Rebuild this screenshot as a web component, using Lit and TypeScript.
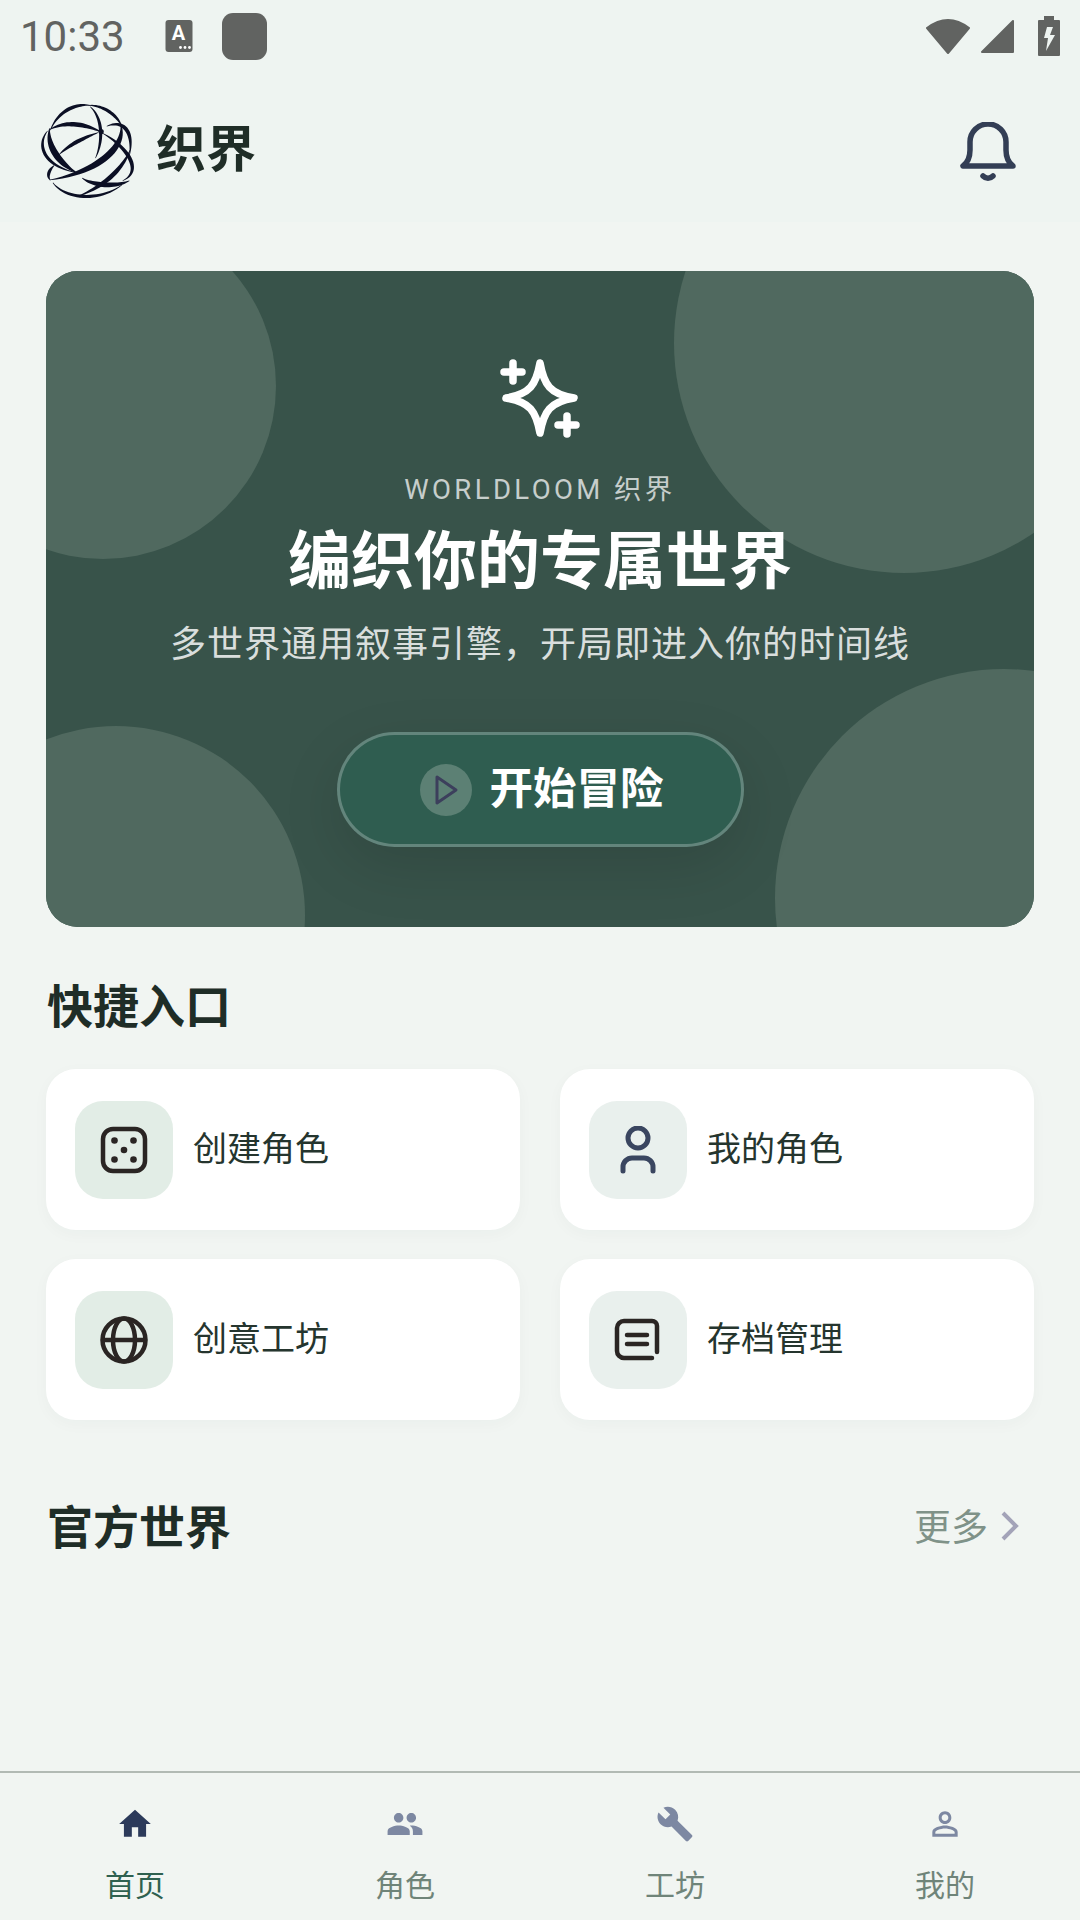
import { LitElement, html, css, svg } from 'lit'
import { customElement } from 'lit/decorators.js'

type Pt = [number, number]

// tapered brush stroke along a cubic, so the logo arcs swell like the original
const brush = (a: Pt, b: Pt, c: Pt, d: Pt, w: number) => {
	const left: string[] = []
	const right: string[] = []
	const n = 24
	for (let i = 0; i <= n; i++) {
		const t = i / n
		const u = 1 - t
		const x = u * u * u * a[0] + 3 * u * u * t * b[0] + 3 * u * t * t * c[0] + t * t * t * d[0]
		const y = u * u * u * a[1] + 3 * u * u * t * b[1] + 3 * u * t * t * c[1] + t * t * t * d[1]
		const dx = 3 * u * u * (b[0] - a[0]) + 6 * u * t * (c[0] - b[0]) + 3 * t * t * (d[0] - c[0])
		const dy = 3 * u * u * (b[1] - a[1]) + 6 * u * t * (c[1] - b[1]) + 3 * t * t * (d[1] - c[1])
		const len = Math.hypot(dx, dy) || 1
		const half = (w / 2) * Math.sin(Math.PI * t) + 0.8
		left.push(`${(x - (dy / len) * half).toFixed(1)} ${(y + (dx / len) * half).toFixed(1)}`)
		right.unshift(`${(x + (dy / len) * half).toFixed(1)} ${(y - (dx / len) * half).toFixed(1)}`)
	}
	return `M${left.concat(right).join('L')}Z`
}

// coordinates follow a 390x360 crop of the mark
const LOGO_STROKES: [Pt, Pt, Pt, Pt, number][] = [
	[[92, 118], [120, 50], [180, 38], [212, 43], 9],
	[[205, 43], [255, 42], [295, 75], [308, 108], 8],
	[[212, 47], [250, 80], [252, 150], [228, 202], 8],
	[[90, 116], [140, 88], [200, 100], [246, 124], 12],
	[[90, 112], [80, 165], [120, 220], [172, 246], 18],
	[[118, 192], [150, 160], [195, 140], [236, 125], 10],
	[[304, 100], [320, 160], [250, 240], [90, 268], 18],
	[[92, 268], [80, 255], [90, 235], [104, 224], 8],
	[[84, 120], [50, 160], [70, 225], [168, 245], 8],
	[[262, 106], [310, 85], [345, 120], [330, 195], 10],
	[[248, 126], [320, 165], [375, 240], [310, 270], 10],
	[[330, 270], [290, 290], [220, 285], [188, 262], 13],
	[[100, 276], [135, 325], [240, 335], [308, 282], 8],
	[[176, 316], [250, 290], [310, 235], [332, 178], 12],
]

@customElement('app-root')
export class AppRoot extends LitElement {
	static styles = css`
		:host {
			display: block;
			font-family: Roboto, 'Noto Sans CJK SC', sans-serif;
		}

		.page {
			width: 1080px;
			height: 1920px;
			display: flex;
			flex-direction: column;
			background: #f1f5f2;
			color: #1f2d27;
		}

		.top {
			background: #eef4f1;
		}

		.status {
			height: 72px;
			display: flex;
			align-items: center;
			padding: 0 20px;
			color: #616361;
		}

		.time {
			font-size: 42px;
			width: 145px;
		}

		.status-a {
			display: block;
			margin-right: 29px;
		}

		.status-app {
			width: 45px;
			height: 47px;
			border-radius: 11px;
			background: #616361;
		}

		.status-right {
			margin-left: auto;
			display: flex;
			align-items: center;
			gap: 9px;
		}

		.status-right svg {
			display: block;
		}

		.battery {
			margin-left: 14px;
		}

		.header {
			height: 150px;
			display: flex;
			align-items: center;
			padding: 0 62px 0 33px;
		}

		.logo {
			margin-top: 7px;
		}

		.bell {
			margin-top: 14px;
		}

		.header h1 {
			margin: 5px 0 0 20px;
			font-size: 50px;
			font-weight: 700;
			line-height: 60px;
			flex: 1;
		}

		main {
			flex: 1;
			padding: 49px 46px 0;
		}

		.hero {
			position: relative;
			overflow: hidden;
			height: 656px;
			box-sizing: border-box;
			padding-top: 87px;
			border-radius: 32px;
			background: #38534a;
			display: flex;
			flex-direction: column;
			align-items: center;
			color: #fff;
		}

		.blob {
			position: absolute;
			border-radius: 50%;
			background: #50695f;
		}

		.blob.a {
			width: 346px;
			height: 346px;
			left: -116px;
			top: -58px;
		}

		.blob.b {
			width: 460px;
			height: 460px;
			left: 628px;
			top: -158px;
		}

		.blob.c {
			width: 378px;
			height: 378px;
			left: -119px;
			top: 455px;
		}

		.blob.d {
			width: 458px;
			height: 458px;
			left: 729px;
			top: 398px;
		}

		.hero > svg,
		.hero > div:not(.blob),
		.hero > h2 {
			position: relative;
		}

		.eyebrow {
			margin-top: 34px;
			font-size: 27.5px;
			line-height: 36px;
			letter-spacing: 3.4px;
			color: rgba(255, 255, 255, 0.72);
		}

		.hero h2 {
			margin: 18px 0 0;
			font-size: 63px;
			line-height: 72px;
			font-weight: 700;
		}

		.sub {
			margin-top: 22px;
			font-size: 36px;
			line-height: 50px;
			letter-spacing: 1px;
			color: rgba(255, 255, 255, 0.82);
		}

		.start {
			margin-top: 62px;
			width: 407px;
			height: 115px;
			box-sizing: border-box;
			border: 3px solid rgba(255, 255, 255, 0.25);
			border-radius: 58px;
			background: #2f5d50;
			box-shadow: 0 20px 60px rgba(0, 0, 0, 0.12);
			display: flex;
			align-items: center;
			padding-left: 80px;
			font-size: 43.5px;
			font-weight: 700;
		}

		.start-label {
			margin-bottom: 9px;
		}

		.play {
			width: 52px;
			height: 52px;
			border-radius: 50%;
			background: #5c8074;
			margin-right: 18px;
			display: flex;
			align-items: center;
			justify-content: center;
		}

		.section {
			display: flex;
			align-items: center;
			justify-content: space-between;
			height: 56px;
			padding: 0 15px 4px 1px;
			font-size: 46px;
			font-weight: 700;
			margin-top: 48px;
		}

		.section.far {
			margin-top: 76px;
		}

		.more {
			display: flex;
			align-items: center;
			gap: 13px;
			margin-top: 2px;
			font-size: 37px;
			font-weight: 400;
			color: #7f9288;
		}

		.more svg {
			margin-top: 2px;
		}

		.grid {
			margin-top: 34px;
			display: grid;
			grid-template-columns: 474px 474px;
			gap: 29px 40px;
		}

		.tile {
			height: 161px;
			box-sizing: border-box;
			border-radius: 30px;
			background: #fff;
			box-shadow: 0 4px 16px rgba(40, 70, 60, 0.03);
			display: flex;
			align-items: center;
			padding-left: 29px;
			font-size: 34px;
			color: #25352e;
		}

		.tile-label {
			margin-bottom: 6px;
		}

		.tile-icon {
			width: 98px;
			height: 98px;
			border-radius: 28px;
			background: #e2ede6;
			display: flex;
			align-items: center;
			justify-content: center;
			margin-right: 20px;
		}

		.tile-icon.soft {
			background: #e9f0ed;
		}

		nav {
			height: 149px;
			box-sizing: border-box;
			border-top: 2px solid #b2bab4;
			display: grid;
			grid-template-columns: repeat(4, 1fr);
		}

		.tab {
			display: flex;
			flex-direction: column;
			align-items: center;
			padding-top: 32px;
			font-size: 30px;
			line-height: 42px;
			color: #6f8479;
		}

		.tab.on {
			color: #2f6150;
		}

		.tab svg {
			display: block;
			margin-bottom: 22px;
			fill: #7d88a2;
		}

		.tab.on svg {
			fill: #2c3a5a;
		}

		.ink {
			fill: none;
			stroke: #2a2523;
			stroke-width: 4.5;
			stroke-linecap: round;
			stroke-linejoin: round;
		}

		.ink.blue {
			stroke: #3a4660;
			stroke-width: 5;
		}
	`

	private logo() {
		return html`<svg class="logo" width="103" height="99" viewBox="40 30 310 298" fill="#0b0f24">
			${LOGO_STROKES.map(([a, b, c, d, w]) => svg`<path d=${brush(a, b, c, d, w)}></path>`)}
			<circle cx="245" cy="122" r="8"></circle>
		</svg>`
	}

	private tile(label: string, icon: unknown, soft = false) {
		return html`<div class="tile">
			<div class="tile-icon ${soft ? 'soft' : ''}">${icon}</div>
			<span class="tile-label">${label}</span>
		</div>`
	}

	private tab(label: string, size: number, d: string, on = false) {
		return html`<div class="tab ${on ? 'on' : ''}">
			<svg width=${size} height=${size} viewBox="0 0 24 24"><path d=${d}></path></svg>
			${label}
		</div>`
	}

	render() {
		const die = html`<svg width="48" height="48" viewBox="0 0 48 48">
			<rect class="ink" x="3" y="3" width="42" height="42" rx="10"></rect>
			<g fill="#2a2523">
				<circle cx="14.5" cy="14.5" r="3.3"></circle>
				<circle cx="33.5" cy="14.5" r="3.3"></circle>
				<circle cx="24" cy="24" r="3.3"></circle>
				<circle cx="14.5" cy="33.5" r="3.3"></circle>
				<circle cx="33.5" cy="33.5" r="3.3"></circle>
			</g>
		</svg>`
		const person = html`<svg width="48" height="48" viewBox="0 0 48 48">
			<circle class="ink blue" cx="24" cy="12" r="10"></circle>
			<path class="ink blue" d="M9 45v-4a9 9 0 0 1 9-9h12a9 9 0 0 1 9 9v4"></path>
		</svg>`
		const globe = html`<svg width="48" height="48" viewBox="0 0 48 48">
			<circle class="ink" cx="24" cy="24" r="21.5"></circle>
			<ellipse class="ink" cx="24" cy="24" rx="11" ry="21.5"></ellipse>
			<path class="ink" d="M3 24h42"></path>
		</svg>`
		const archive = html`<svg width="48" height="48" viewBox="0 0 48 48">
			<path class="ink" d="M43 36V10a5 5 0 0 0-5-5H10a7 7 0 0 0-7 7v23a7 7 0 0 0 7 7h28"></path>
			<path class="ink" d="M13 19h20M13 28h20"></path>
		</svg>`

		return html`<div class="page">
			<div class="top">
				<div class="status">
					<span class="time">10:33</span>
					<svg class="status-a" width="28" height="32" viewBox="0 0 27 32">
						<rect width="27" height="32" rx="3" fill="#616361"></rect>
						<text x="13" y="20" text-anchor="middle" font-size="20" font-weight="700" fill="#fff" font-family="Roboto">A</text>
						<g fill="#fff"><circle cx="15" cy="27.5" r="1.4"></circle><circle cx="19.5" cy="27.5" r="1.4"></circle><circle cx="24" cy="27.5" r="1.4"></circle></g>
					</svg>
					<div class="status-app"></div>
					<div class="status-right">
						<svg width="46" height="38" viewBox="0 0 46 38">
							<path d="M2 11Q23-5 44 11L23 36Z" fill="#616361" stroke="#616361" stroke-width="2" stroke-linejoin="round"></path>
						</svg>
						<svg width="35" height="36" viewBox="0 0 35 36">
							<path d="M33 3V34H2Z" fill="#616361" stroke="#616361" stroke-width="2" stroke-linejoin="round"></path>
						</svg>
						<svg class="battery" width="22" height="40" viewBox="0 0 22 40">
							<path d="M6 0h10v4h5a1 1 0 0 1 1 1v34a1 1 0 0 1-1 1H1a1 1 0 0 1-1-1V5a1 1 0 0 1 1-1h5Z" fill="#616361"></path>
							<path d="M9 11h6l-3 8h5l-9 16 2-13H6Z" fill="#eef4f1"></path>
						</svg>
					</div>
				</div>
				<div class="header">
					${this.logo()}
					<h1>织界</h1>
					<svg class="bell" width="60" height="64" viewBox="0 0 60 64" fill="none" stroke="#333e55" stroke-width="5.5" stroke-linecap="round" stroke-linejoin="round">
						<path d="M5 44h50c-4-3-7-9-7-16v-8a18 18 0 0 0-36 0v8c0 7-3 13-7 16Z"></path>
						<path d="M25 54c3 3 7 3 10 0"></path>
					</svg>
				</div>
			</div>
			<main>
				<section class="hero">
					<span class="blob a"></span>
					<span class="blob b"></span>
					<span class="blob c"></span>
					<span class="blob d"></span>
					<svg width="80" height="80" viewBox="0 0 80 80" fill="none" stroke="#fff" stroke-width="7.5" stroke-linecap="round" stroke-linejoin="round">
						<path d="M40 5C44 27 50 36 74 40 50 44 44 53 40 75 36 53 30 44 6 40 30 36 36 27 40 5Z"></path>
						<path d="M13 5v18M4 14h18M67 58v18M58 67h18"></path>
					</svg>
					<div class="eyebrow">WORLDLOOM 织界</div>
					<h2>编织你的专属世界</h2>
					<div class="sub">多世界通用叙事引擎，开局即进入你的时间线</div>
					<div class="start">
						<span class="play">
							<svg width="26" height="32" viewBox="0 0 26 32" fill="none" stroke="#3c3f5c" stroke-width="3" stroke-linejoin="round">
								<path d="M4 3l19 13L4 29Z"></path>
							</svg>
						</span>
						<span class="start-label">开始冒险</span>
					</div>
				</section>
				<div class="section">快捷入口</div>
				<div class="grid">
					${this.tile('创建角色', die)}
					${this.tile('我的角色', person, true)}
					${this.tile('创意工坊', globe)}
					${this.tile('存档管理', archive, true)}
				</div>
				<div class="section far">
					官方世界
					<span class="more">
						更多
						<svg width="18" height="30" viewBox="0 0 18 30" fill="none" stroke="#a3a3b8" stroke-width="4">
							<path d="M2 2l13 13L2 28"></path>
						</svg>
					</span>
				</div>
			</main>
			<nav>
				${this.tab('首页', 38, 'M10 20v-6h4v6h5v-8h3L12 3 2 12h3v8z', true)}
				${this.tab('角色', 38, 'M16 11c1.66 0 2.99-1.34 2.99-3S17.66 5 16 5c-1.66 0-3 1.34-3 3s1.34 3 3 3zm-8 0c1.66 0 2.99-1.34 2.99-3S9.66 5 8 5C6.34 5 5 6.34 5 8s1.34 3 3 3zm0 2c-2.33 0-7 1.17-7 3.5V19h14v-2.5c0-2.33-4.67-3.5-7-3.5zm8 0c-.29 0-.62.02-.97.05 1.16.84 1.97 1.97 1.97 3.45V19h6v-2.5c0-2.33-4.67-3.5-7-3.5z')}
				${this.tab('工坊', 38, 'M22.7 19l-9.1-9.1c.9-2.3.4-5-1.5-6.9-2-2-5-2.4-7.4-1.3L9 6 6 9 1.6 4.7C.4 7.1.9 10.1 2.9 12.1c1.9 1.9 4.6 2.4 6.9 1.5l9.1 9.1c.4.4 1 .4 1.4 0l2.3-2.3c.5-.4.5-1.1.1-1.4z')}
				${this.tab('我的', 38, 'M12 5.9c1.16 0 2.1.94 2.1 2.1s-.94 2.1-2.1 2.1S9.9 9.16 9.9 8s.94-2.1 2.1-2.1m0 9c2.97 0 6.1 1.46 6.1 2.1v1.1H5.9V17c0-.64 3.13-2.1 6.1-2.1M12 4C9.79 4 8 5.79 8 8s1.79 4 4 4 4-1.79 4-4-1.79-4-4-4zm0 9c-2.67 0-8 1.34-8 4v3h16v-3c0-2.66-5.33-4-8-4z')}
			</nav>
		</div>`
	}
}
